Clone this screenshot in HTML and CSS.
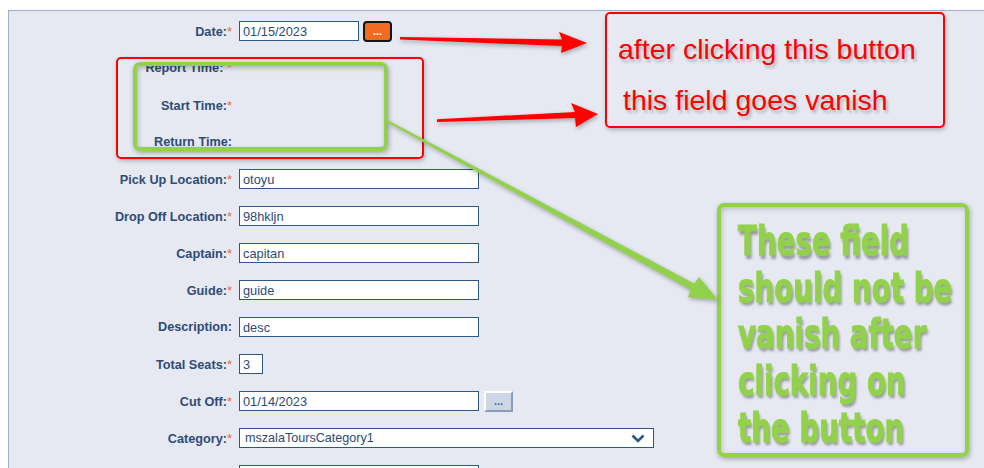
FILE: index.html
```html
<!DOCTYPE html>
<html>
<head>
<meta charset="utf-8">
<link rel="stylesheet" href="styles.css">
</head>
<body>
<div class="panel">
  <div class="form">
    <div class="lbl">Date:<span class="req">*</span></div>
    <div class="field"><input class="inp w120" value="01/15/2023"><button class="btn-date">...</button></div>

    <div class="lbl lbl-up">Report Time: <span class="req">*</span></div>
    <div class="field"></div>

    <div class="lbl">Start Time:<span class="req">*</span></div>
    <div class="field"></div>

    <div class="lbl">Return Time:</div>
    <div class="field"></div>

    <div class="lbl">Pick Up Location:<span class="req">*</span></div>
    <div class="field"><input class="inp w240" value="otoyu"></div>

    <div class="lbl">Drop Off Location:<span class="req">*</span></div>
    <div class="field"><input class="inp w240" value="98hkljn"></div>

    <div class="lbl">Captain:<span class="req">*</span></div>
    <div class="field"><input class="inp w240" value="capitan"></div>

    <div class="lbl">Guide:<span class="req">*</span></div>
    <div class="field"><input class="inp w240" value="guide"></div>

    <div class="lbl">Description:</div>
    <div class="field"><input class="inp w240" value="desc"></div>

    <div class="lbl">Total Seats:<span class="req">*</span></div>
    <div class="field"><input class="inp w24" value="3"></div>

    <div class="lbl">Cut Off:<span class="req">*</span></div>
    <div class="field"><input class="inp w240" value="01/14/2023"><button class="btn-pick">...</button></div>

    <div class="lbl">Category:<span class="req">*</span></div>
    <div class="field">
      <div class="select">
        <span>mszalaToursCategory1</span>
        <svg class="chev" width="14" height="9" viewBox="0 0 14 9"><path d="M1.5 1.5 L7 7 L12.5 1.5" fill="none" stroke="#2d568a" stroke-width="2.6"/></svg>
      </div>
    </div>

    <div class="lbl"></div>
    <div class="field"><input class="inp w240" value=""></div>
  </div>
</div>

<div class="hl hl-red"></div>
<div class="hl hl-green"></div>

<div class="note note-red">
  <div class="nl">after clicking this button</div>
  <div class="nl nl2">this field goes vanish</div>
</div>

<div class="note note-green">
  <div class="big">These field<br>should not be<br>vanish after<br>clicking on<br>the button</div>
</div>

<svg class="arrows" width="984" height="468" viewBox="0 0 984 468">
  <polygon class="ar-red" points="400,37 562,39.5 559,32 587,43 561,53 562,46 400,39.5"/>
  <polygon class="ar-red" points="437,119.2 575,112 571,103 598,114 576,127 575,118 437,122"/>
  <polygon class="ar-green" points="387.5,120.1 694.1,283.5 699,277 718,300 688,297 690.7,289.7 386.5,121.9"/>
</svg>
</body>
</html>
```
FILE: styles.css
```css
html, body {
  margin: 0;
  padding: 0;
  background: #ffffff;
  overflow: hidden;
  width: 984px;
  height: 468px;
}

body {
  position: relative;
  font-family: "Liberation Sans", Arial, sans-serif;
}

.panel {
  margin: 10px 0 0 8px;
  height: 458px;
  box-sizing: border-box;
  background: #e6e9f2;
  border-top: 1px solid #9daed0;
  border-left: 1px solid #9daed0;
}

.form {
  display: grid;
  grid-template-columns: 223px 1fr;
  grid-auto-rows: 20px;
  column-gap: 7px;
  row-gap: 17px;
  padding-top: 10px;
}

.lbl {
  text-align: right;
  font-weight: bold;
  font-size: 12.7px;
  line-height: 21px;
  color: #2f4b77;
  white-space: nowrap;
}

.lbl-up {
  line-height: 19px;
}

.req {
  color: #f26a3c;
  font-weight: normal;
  font-size: 13px;
}

.field {
  display: flex;
  align-items: center;
}

.inp {
  box-sizing: border-box;
  height: 20px;
  margin: 0;
  border: 1px solid #2d568a;
  background: #ffffff;
  padding: 0 3px;
  font-family: "Liberation Sans", Arial, sans-serif;
  font-size: 12.8px;
  color: #2b4a78;
  outline: none;
}

.w120 { width: 120px; }
.w240 { width: 240px; }
.w24 { width: 24px; }

.btn-date {
  margin-left: 4px;
  width: 29px;
  height: 21px;
  box-sizing: border-box;
  background: #f26b21;
  border: 2px solid #151515;
  border-radius: 4px;
  color: #ffffff;
  font-weight: bold;
  font-size: 11px;
  line-height: 12px;
  padding: 0;
  font-family: "Liberation Sans", Arial, sans-serif;
}

.btn-pick {
  margin-left: 5px;
  width: 29px;
  height: 21px;
  box-sizing: border-box;
  background: #cdd6e4;
  border-style: solid;
  border-width: 2px;
  border-color: #ffffff #8a9cb8 #8a9cb8 #ffffff;
  color: #3d5f93;
  font-weight: bold;
  font-size: 11px;
  line-height: 12px;
  padding: 0;
  font-family: "Liberation Sans", Arial, sans-serif;
}

.select {
  box-sizing: border-box;
  width: 415px;
  height: 20px;
  border: 1px solid #2d568a;
  background: #ffffff;
  display: flex;
  align-items: center;
  justify-content: space-between;
  padding: 0 8px 0 5px;
  font-size: 12.6px;
  color: #2b4a78;
}

.chev {
  display: block;
}

/* annotations */
.hl {
  position: absolute;
  box-sizing: border-box;
}

.hl-red {
  left: 116px;
  top: 57px;
  width: 308px;
  height: 102px;
  border: 2px solid #ff0000;
  border-radius: 5px;
  box-shadow: 1px 2px 4px rgba(0, 0, 0, 0.25);
}

.hl-green {
  left: 133px;
  top: 62px;
  width: 255px;
  height: 89px;
  border: 4px solid #92d14b;
  border-radius: 7px;
  box-shadow: 1px 2px 5px rgba(0, 0, 0, 0.3), inset 1px 2px 5px rgba(0, 0, 0, 0.25);
}

.note {
  position: absolute;
  box-sizing: border-box;
}

.note-red {
  left: 605px;
  top: 12px;
  width: 340px;
  height: 116px;
  border: 2px solid #ff0000;
  border-radius: 5px;
  box-shadow: 1px 2px 4px rgba(0, 0, 0, 0.25);
  padding: 10px 0 0 11px;
  color: #ff0000;
  font-family: "Liberation Sans", Arial, sans-serif;
  font-size: 28.5px;
  line-height: 51px;
  white-space: nowrap;
  text-shadow: 2px 3px 3px rgba(0, 0, 0, 0.22);
}

.nl2 {
  padding-left: 5px;
}

.note-green {
  left: 717px;
  top: 203px;
  width: 252px;
  height: 254px;
  border: 4px solid #92d14b;
  border-radius: 7px;
  box-shadow: 1px 2px 5px rgba(0, 0, 0, 0.3), inset 1px 2px 5px rgba(0, 0, 0, 0.2);
  padding: 11px 0 0 17px;
}

.big {
  color: #92d14b;
  font-family: "DejaVu Sans Condensed", "DejaVu Sans", sans-serif;
  font-stretch: condensed;
  font-weight: bold;
  font-size: 40px;
  line-height: 44.7px;
  white-space: nowrap;
  -webkit-text-stroke: 1px #92d14b;
  text-shadow: 2px 3px 3px rgba(0, 0, 0, 0.35);
  transform: scale(0.77, 1.04);
  transform-origin: 0 0;
}

.arrows {
  position: absolute;
  left: 0;
  top: 0;
  pointer-events: none;
}

.ar-red {
  fill: #ff0000;
  filter: drop-shadow(1px 2px 2px rgba(0, 0, 0, 0.3));
}

.ar-green {
  fill: #92d14b;
  filter: drop-shadow(1px 2px 2px rgba(0, 0, 0, 0.3));
}
```
